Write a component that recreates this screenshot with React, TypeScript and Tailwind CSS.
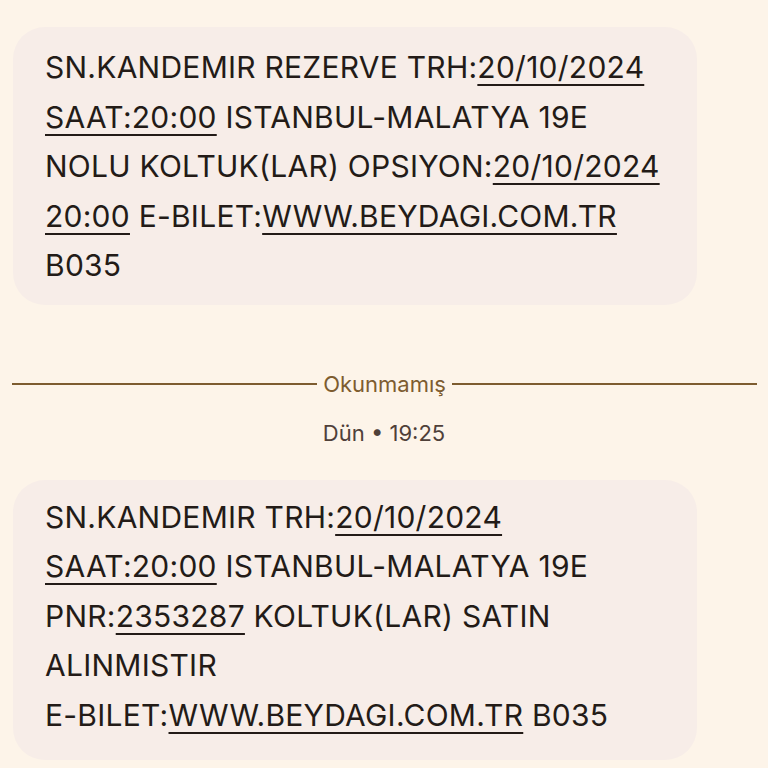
const U = ({ children }: { children: React.ReactNode }) => (
  <span className="underline decoration-2 underline-offset-[6px]">{children}</span>
)

export default function App() {
  return (
    <div
      className="h-[768px] w-[768px] overflow-hidden bg-[#fdf4e9] text-[#231b17]"
      style={{ fontFamily: 'Inter, "Noto Sans", sans-serif' }}
    >
      {/* first message */}
      <div className="pl-[13px] pt-[27px]">
        <div className="w-[684px] rounded-[32px] bg-[#f7ede8] pl-[32px] pr-4 pt-[16px] pb-[14px] text-[30px] leading-[49.5px] tracking-[0.25px]">
          <div>SN.KANDEMIR REZERVE TRH:<U>20/10/2024</U></div>
          <div><U>SAAT:20:00</U> ISTANBUL-MALATYA 19E</div>
          <div>NOLU KOLTUK(LAR) OPSIYON:<U>20/10/2024</U></div>
          <div><U>20:00</U> E-BILET:<U>WWW.BEYDAGI.COM.TR</U></div>
          <div>B035</div>
        </div>
      </div>

      {/* unread divider */}
      <div className="mt-[65px] flex items-center gap-[6px] pl-3 pr-[11px]">
        <div className="h-[2px] flex-1 bg-[#7d5c30]" />
        <span className="text-[22px] leading-[28px] text-[#7d5c30]">Okunmamış</span>
        <div className="h-[2px] flex-1 bg-[#7d5c30]" />
      </div>
      <div className="mt-[21px] text-center text-[22px] leading-[28px] text-[#4f4039]">Dün • 19:25</div>

      {/* second message */}
      <div className="pl-[13px] pt-[33px]">
        <div className="w-[684px] rounded-[32px] bg-[#f7ede8] pl-[32px] pr-4 pt-[13px] pb-[20px] text-[30px] leading-[49.5px] tracking-[0.25px]">
          <div>SN.KANDEMIR TRH:<U>20/10/2024</U></div>
          <div><U>SAAT:20:00</U> ISTANBUL-MALATYA 19E</div>
          <div>PNR:<U>2353287</U> KOLTUK(LAR) SATIN</div>
          <div>ALINMISTIR</div>
          <div>E-BILET:<U>WWW.BEYDAGI.COM.TR</U> B035</div>
        </div>
      </div>
    </div>
  )
}
